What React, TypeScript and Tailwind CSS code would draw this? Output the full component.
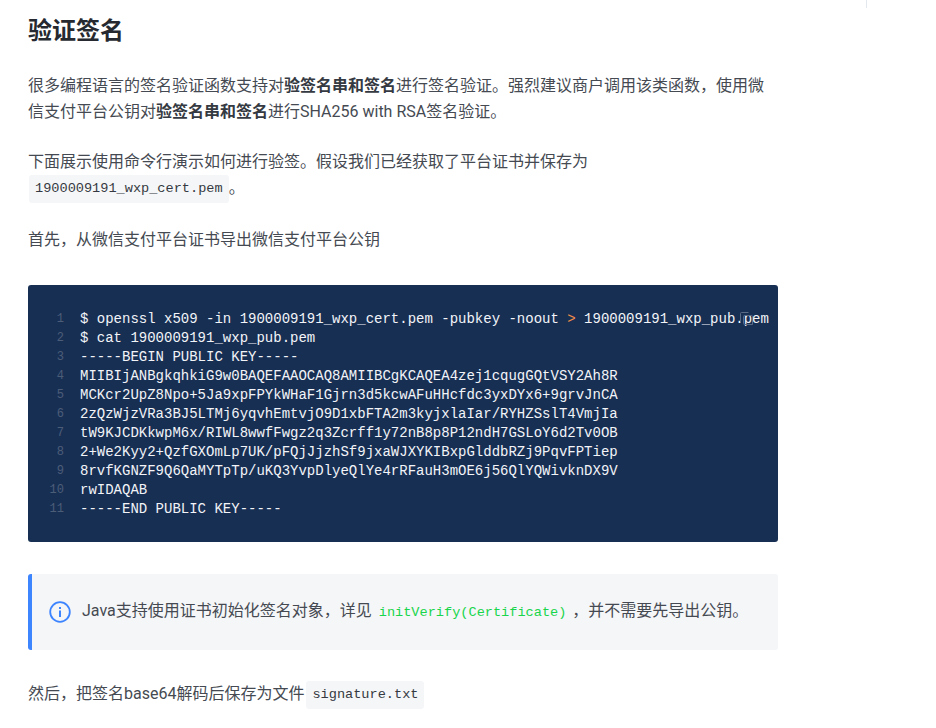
import React from "react";

const codeLines: React.ReactNode[] = [
  <>$ openssl x509 -in 1900009191_wxp_cert.pem -pubkey -noout <span className="text-[#f08d49]">&gt;</span> 1900009191_wxp_pub.pem</>,
  "$ cat 1900009191_wxp_pub.pem",
  "-----BEGIN PUBLIC KEY-----",
  "MIIBIjANBgkqhkiG9w0BAQEFAAOCAQ8AMIIBCgKCAQEA4zej1cqugGQtVSY2Ah8R",
  "MCKcr2UpZ8Npo+5Ja9xpFPYkWHaF1Gjrn3d5kcwAFuHHcfdc3yxDYx6+9grvJnCA",
  "2zQzWjzVRa3BJ5LTMj6yqvhEmtvjO9D1xbFTA2m3kyjxlaIar/RYHZSslT4VmjIa",
  "tW9KJCDKkwpM6x/RIWL8wwfFwgz2q3Zcrff1y72nB8p8P12ndH7GSLoY6d2Tv0OB",
  "2+We2Kyy2+QzfGXOmLp7UK/pFQjJjzhSf9jxaWJXYKIBxpGlddbRZj9PqvFPTiep",
  "8rvfKGNZF9Q6QaMYTpTp/uKQ3YvpDlyeQlYe4rRFauH3mOE6j56QlYQWivknDX9V",
  "rwIDAQAB",
  "-----END PUBLIC KEY-----",
];

function InlineCode({ children }: { children: React.ReactNode }) {
  return (
    <code className="inline-block h-[28px] rounded-[3px] bg-[#f5f6f7] px-[6px] align-middle font-['Liberation_Mono',monospace] text-[13.6px] leading-[28px] text-[#353a42]">
      {children}
    </code>
  );
}

export default function App() {
  return (
    <div className="relative h-[728px] w-[936px] overflow-hidden bg-white font-['Roboto','Noto_Sans_CJK_SC',sans-serif] text-[16px] leading-[26px] text-[#454a52]">
      <div className="absolute left-[866px] top-0 h-[8px] w-px bg-[#e3e8ee]" />
      <div className="flex w-[778px] flex-col pl-[28px] pt-[14px]">
        <h1 className="text-[24px] font-bold leading-[34px] text-[#262a30]">验证签名</h1>

        <p className="mt-[25px]">
          很多编程语言的签名验证函数支持对<strong className="font-bold text-[#353a42]">验签名串和签名</strong>进行签名验证。强烈建议商户调用该类函数，使用微信支付平台公钥对<strong className="font-bold text-[#353a42]">验签名串和签名</strong>进行SHA256 with RSA签名验证。
        </p>

        <p className="mt-[24px]">
          下面展示使用命令行演示如何进行验签。假设我们已经获取了平台证书并保存为
          <br />
          <span className="ml-px"><InlineCode>1900009191_wxp_cert.pem</InlineCode></span>。
        </p>

        <p className="mt-[24px]">首先，从微信支付平台证书导出微信支付平台公钥</p>

        <div className="relative mt-[32px] flex h-[257px] rounded-[3px] bg-[#182f54] pt-[25px] font-['Liberation_Mono',monospace] text-[14px] leading-[19px]">
          <div className="flex w-[52px] shrink-0 flex-col items-end pr-[16px] text-[12px] text-[#4c5d78]">
            {codeLines.map((_, i) => (
              <span key={i} className="h-[19px]">{i + 1}</span>
            ))}
          </div>
          <pre className="whitespace-pre font-['Liberation_Mono',monospace] text-[14px] leading-[19px] text-[#f2f4f8]">
            {codeLines.map((line, i) => (
              <div key={i} className="h-[19px]">{line}</div>
            ))}
          </pre>
          <svg className="absolute left-[711px] top-[26px] text-[#5a6b85]" width="15" height="15" viewBox="0 0 15 15" fill="none" stroke="currentColor" strokeWidth="1">
            <path d="M1.5 11.5V2.5A1 1 0 0 1 2.5 1.5H9.5" />
            <path d="M5.5 4.5H12.5A1 1 0 0 1 13.5 5.5V13.5H5.5A1 1 0 0 1 4.5 12.5V5.5A1 1 0 0 1 5.5 4.5Z" />
          </svg>
        </div>

        <div className="mt-[32px] flex h-[76px] items-center rounded-[3px] border-l-4 border-[#3d84ff] bg-[#f5f6f8] pl-[17px]">
          <svg className="shrink-0 text-[#3d84ff]" width="22" height="22" viewBox="0 0 22 22" fill="none" stroke="currentColor">
            <circle cx="11" cy="11" r="9.8" strokeWidth="1.8" />
            <path d="M11 9.5V16" strokeWidth="2" />
            <path d="M11 6V8" strokeWidth="2" />
          </svg>
          <span className="ml-[11px] whitespace-nowrap">
            Java支持使用证书初始化签名对象，详见 <code className="pl-[3px] pr-[2px] font-['Liberation_Mono',monospace] text-[13.6px] text-[#18d54b]">initVerify(Certificate)</code> ，并不需要先导出公钥。
          </span>
        </div>

        <p className="mt-[31px]">
          然后，把签名base64解码后保存为文件<span className="ml-[2px]"><InlineCode>signature.txt</InlineCode></span>
        </p>
      </div>
    </div>
  );
}
